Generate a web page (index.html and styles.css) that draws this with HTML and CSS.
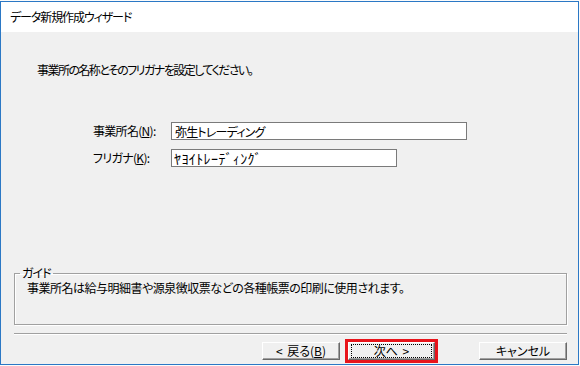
FILE: index.html
```html
<!DOCTYPE html>
<html lang="ja">
<head>
<meta charset="utf-8">
<title>データ新規作成ウィザード</title>
<link rel="stylesheet" href="styles.css">
</head>
<body>
<div class="window">
  <div class="header">データ新規作成ウィザード</div>
  <div class="content">
    <p class="intro">事業所の名称とそのフリガナを設定してください。</p>
    <div class="form">
      <div class="row">
        <label class="label" for="name">事業所名(<u>N</u>):</label>
        <input class="field field-wide" id="name" type="text" value="弥生トレーディング" readonly>
      </div>
      <div class="row">
        <label class="label" for="kana">フリガナ(<u>K</u>):</label>
        <input class="field field-narrow kana" id="kana" type="text" value="ﾔﾖｲﾄﾚｰﾃﾞｨﾝｸﾞ" readonly>
      </div>
    </div>
    <fieldset class="guide">
      <legend class="guide-title">ガイド</legend>
      <div class="guide-text">事業所名は給与明細書や源泉徴収票などの各種帳票の印刷に使用されます。</div>
    </fieldset>
    <div class="separator"></div>
    <div class="buttons">
      <button class="btn btn-back" type="button">&lt; 戻る(<u>B</u>)</button>
      <div class="highlight"><button class="btn btn-next" type="button"><span class="focus">次へ &gt;</span></button></div>
      <button class="btn btn-cancel" type="button">キャンセル</button>
    </div>
  </div>
</div>
</body>
</html>
```
FILE: styles.css
```css
* { box-sizing: border-box; }
html, body { margin: 0; padding: 0; }
body {
  background: #fbfbfb;
  font-family: "Noto Sans CJK JP", "Noto Sans", sans-serif;
  font-size: 12px;
  font-feature-settings: "palt";
  color: #000;
  width: 580px;
  height: 366px;
  overflow: hidden;
}
.window {
  margin-top: 1px;
  width: 579px;
  height: 364px;
  border: 1px solid #2b78c5;
  display: flex;
  flex-direction: column;
}
.header {
  height: 30px;
  line-height: 30px;
  background: #fff;
  padding-left: 9px;
  font-size: 12px;
  letter-spacing: -1.1px;
}
.content {
  flex: 1;
  background: #f0f0f0;
  display: flex;
  flex-direction: column;
  padding: 0 11px 1px 13px;
}
.intro {
  margin: 31px 0 0 0;
  padding-left: 23px;
  line-height: 14px;
  letter-spacing: -1.55px;
}
.form {
  margin-top: 45px;
  display: flex;
  flex-direction: column;
  gap: 9px;
  padding-left: 79px;
}
.row {
  display: flex;
  align-items: center;
  height: 18px;
}
.label {
  width: 78px;
  line-height: 14px;
  letter-spacing: -0.7px;
}
.field {
  height: 18px;
  border: 1px solid #7a7a7a;
  background: #fff;
  padding: 0 0 0 3px;
  margin: 0;
  font-family: "Noto Sans CJK JP", sans-serif;
  font-size: 12px;
  font-feature-settings: "palt";
  color: #000;
  outline: none;
  letter-spacing: -0.8px;
}
.field-wide { width: 296px; }
.field-narrow { width: 226px; }
.kana { font-size: 14px; letter-spacing: 0.4px; padding-left: 2px; }
.guide {
  margin: auto 0 0 0;
  padding: 0;
  min-inline-size: 0;
  border: 1px solid #a0a0a0;
  box-shadow: inset 1px 1px 0 #fff, 1px 1px 0 #fff;
}
.guide-title {
  margin-left: 5px;
  padding: 0 2px;
  line-height: 12px;
  font-size: 12px;
  letter-spacing: -1px;
}
.guide-text {
  height: 45px;
  padding-top: 3px;
  padding-left: 12px;
  line-height: 12px;
  letter-spacing: -0.5px;
}
.separator {
  margin-top: 8px;
  border-top: 1px solid #a0a0a0;
  border-bottom: 1px solid #fff;
  margin-bottom: 4px;
}
.buttons {
  display: flex;
  justify-content: flex-end;
  align-items: center;
  height: 24px;
}
.btn {
  height: 18px;
  margin: 0;
  padding: 0;
  background: #f0f0f0;
  border: 1px solid;
  border-color: #fff #696969 #696969 #fff;
  box-shadow: inset -1px -1px 0 #a0a0a0;
  font-family: "Noto Sans CJK JP", sans-serif;
  font-size: 12px;
  font-feature-settings: "palt";
  color: #000;
  line-height: 14px;
  display: flex;
  align-items: center;
  justify-content: center;
  word-spacing: 2px;
}
.btn-back { width: 78px; margin-right: 5px; }
.highlight {
  border: 3px solid #e8141b;
  display: flex;
}
.btn-next { width: 87px; }
.focus {
  display: flex;
  align-items: center;
  justify-content: center;
  width: 79px;
  height: 12px;
  outline: 1px dotted #000;
}
.btn-cancel { width: 88px; margin-left: 41px; }
```
